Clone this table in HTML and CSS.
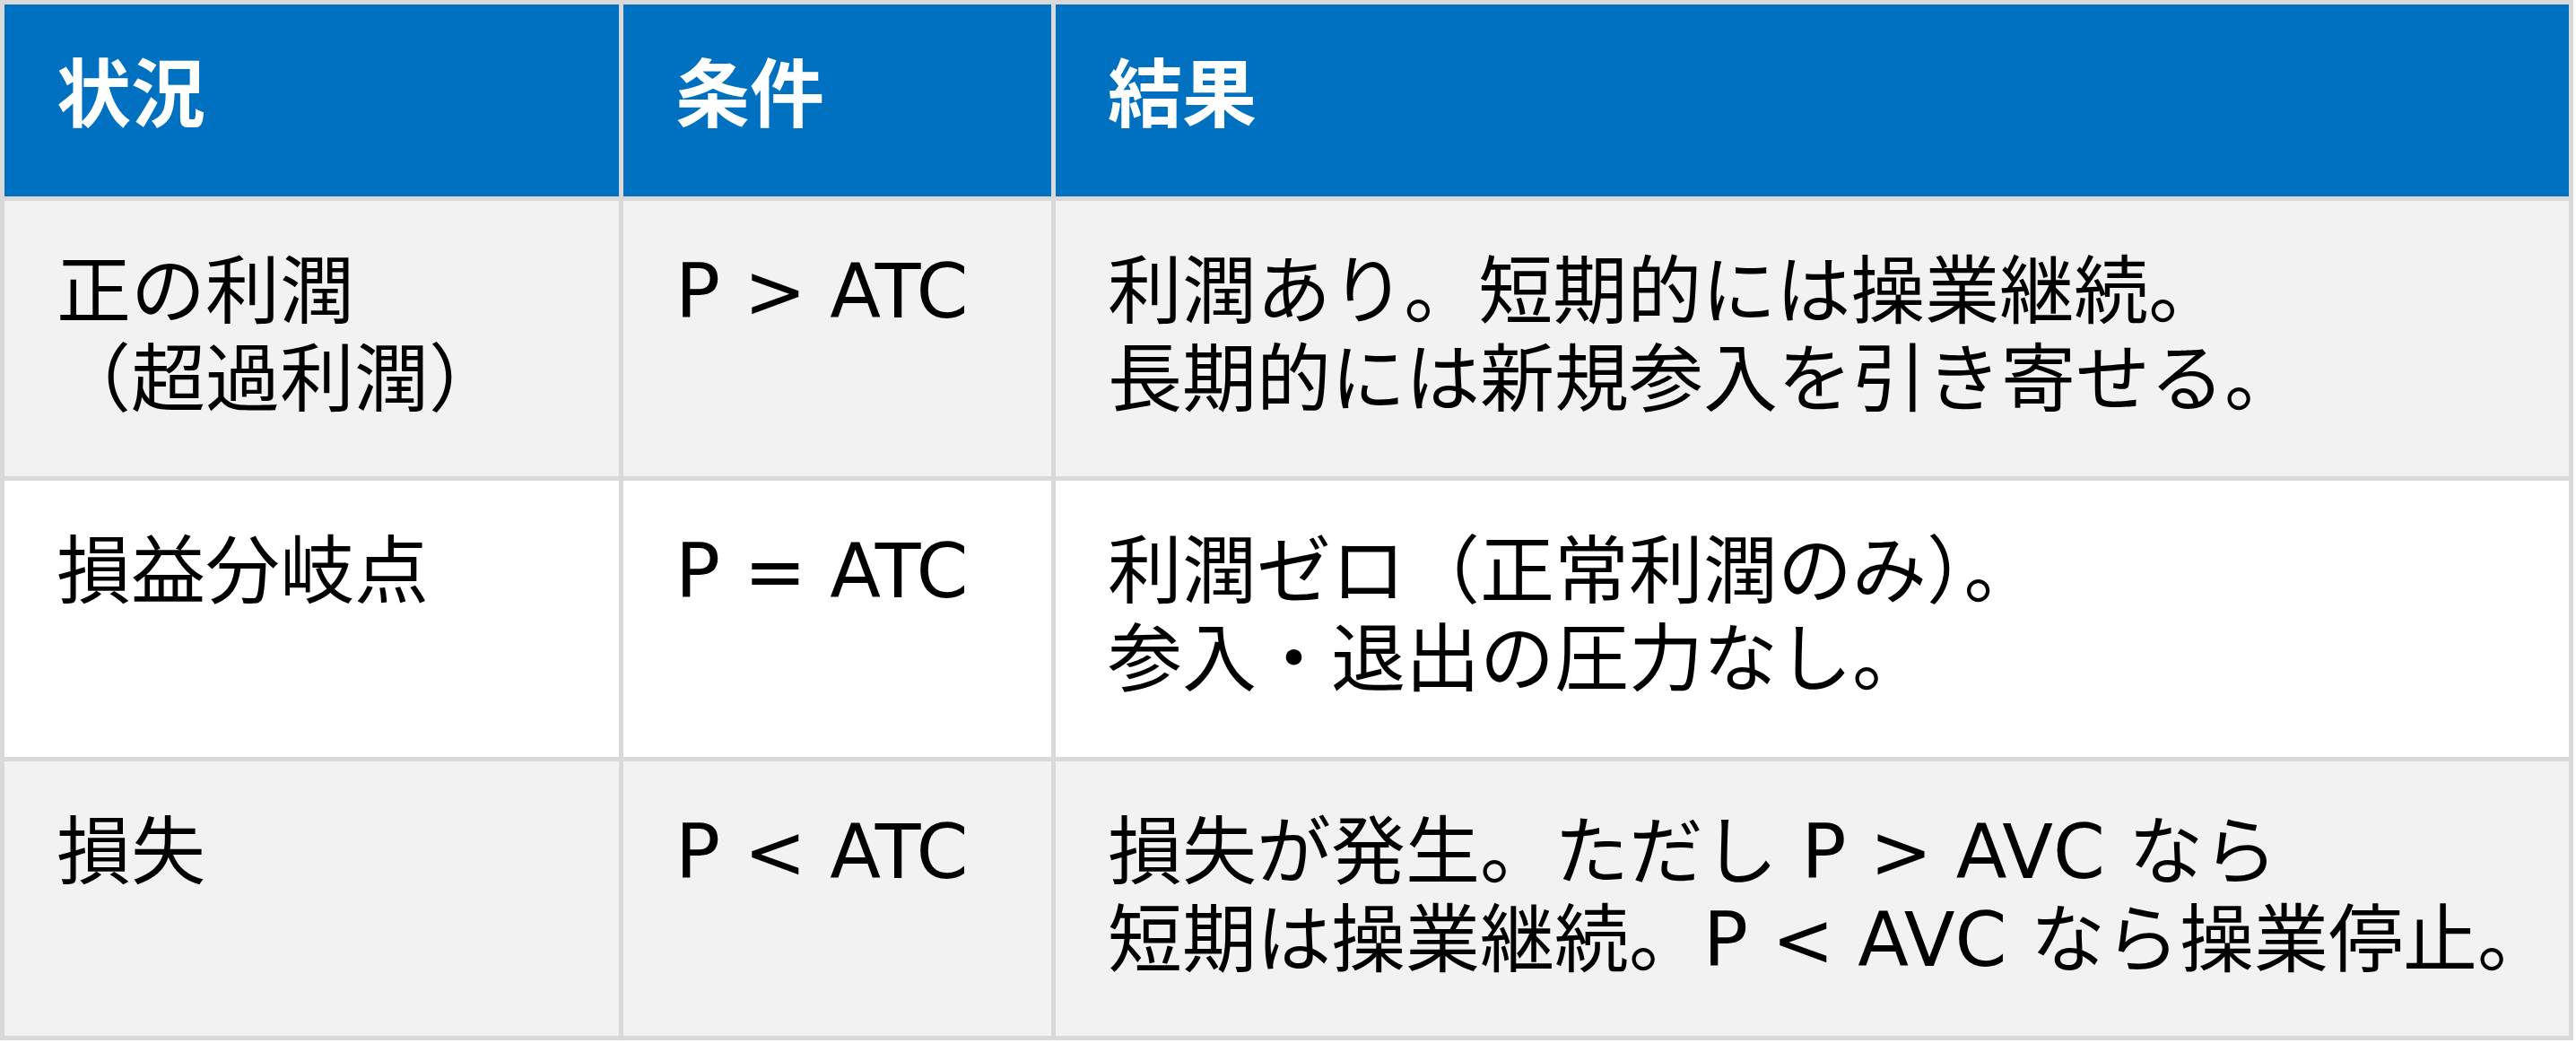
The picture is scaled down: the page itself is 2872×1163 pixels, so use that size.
FILE: index.html
```html
<!DOCTYPE html>
<html lang="ja">
<head>
<meta charset="utf-8">
<title>利潤と操業の判断</title>
<link rel="stylesheet" href="styles.css">
</head>
<body>
<div class="table">
  <div class="cell head">状況</div>
  <div class="cell head">条件</div>
  <div class="cell head">結果</div>

  <div class="cell odd">正の利潤<br>（超過利潤）</div>
  <div class="cell odd">P &gt; ATC</div>
  <div class="cell odd">利潤あり。短期的には操業継続。<br>長期的には新規参入を引き寄せる。</div>

  <div class="cell even">損益分岐点</div>
  <div class="cell even">P = ATC</div>
  <div class="cell even">利潤ゼロ（正常利潤のみ）。<br>参入・退出の圧力なし。</div>

  <div class="cell odd">損失</div>
  <div class="cell odd">P &lt; ATC</div>
  <div class="cell odd">損失が発生。ただし P &gt; AVC なら<br>短期は操業継続。P &lt; AVC なら操業停止。</div>
</div>
</body>
</html>
```
FILE: styles.css
```css
html, body {
  margin: 0;
  padding: 0;
  background: #ffffff;
}

body {
  font-family: "DejaVu Sans", "Noto Sans CJK JP", sans-serif;
  font-size: 83px;
  line-height: 98px;
  color: #000000;
}

.table {
  display: grid;
  grid-template-columns: 685px 477px 1687px;
  grid-template-rows: 214px 307px 308px 306px;
  gap: 5px;
  padding: 5px;
  width: 2859px;
  background: #d9d9d9;
}

.cell {
  padding: 53px 58px 0 58px;
  white-space: nowrap;
}

.head {
  background: #0070c0;
  color: #ffffff;
  font-weight: bold;
}

.odd {
  background: #f2f2f2;
}

.even {
  background: #ffffff;
}
```
